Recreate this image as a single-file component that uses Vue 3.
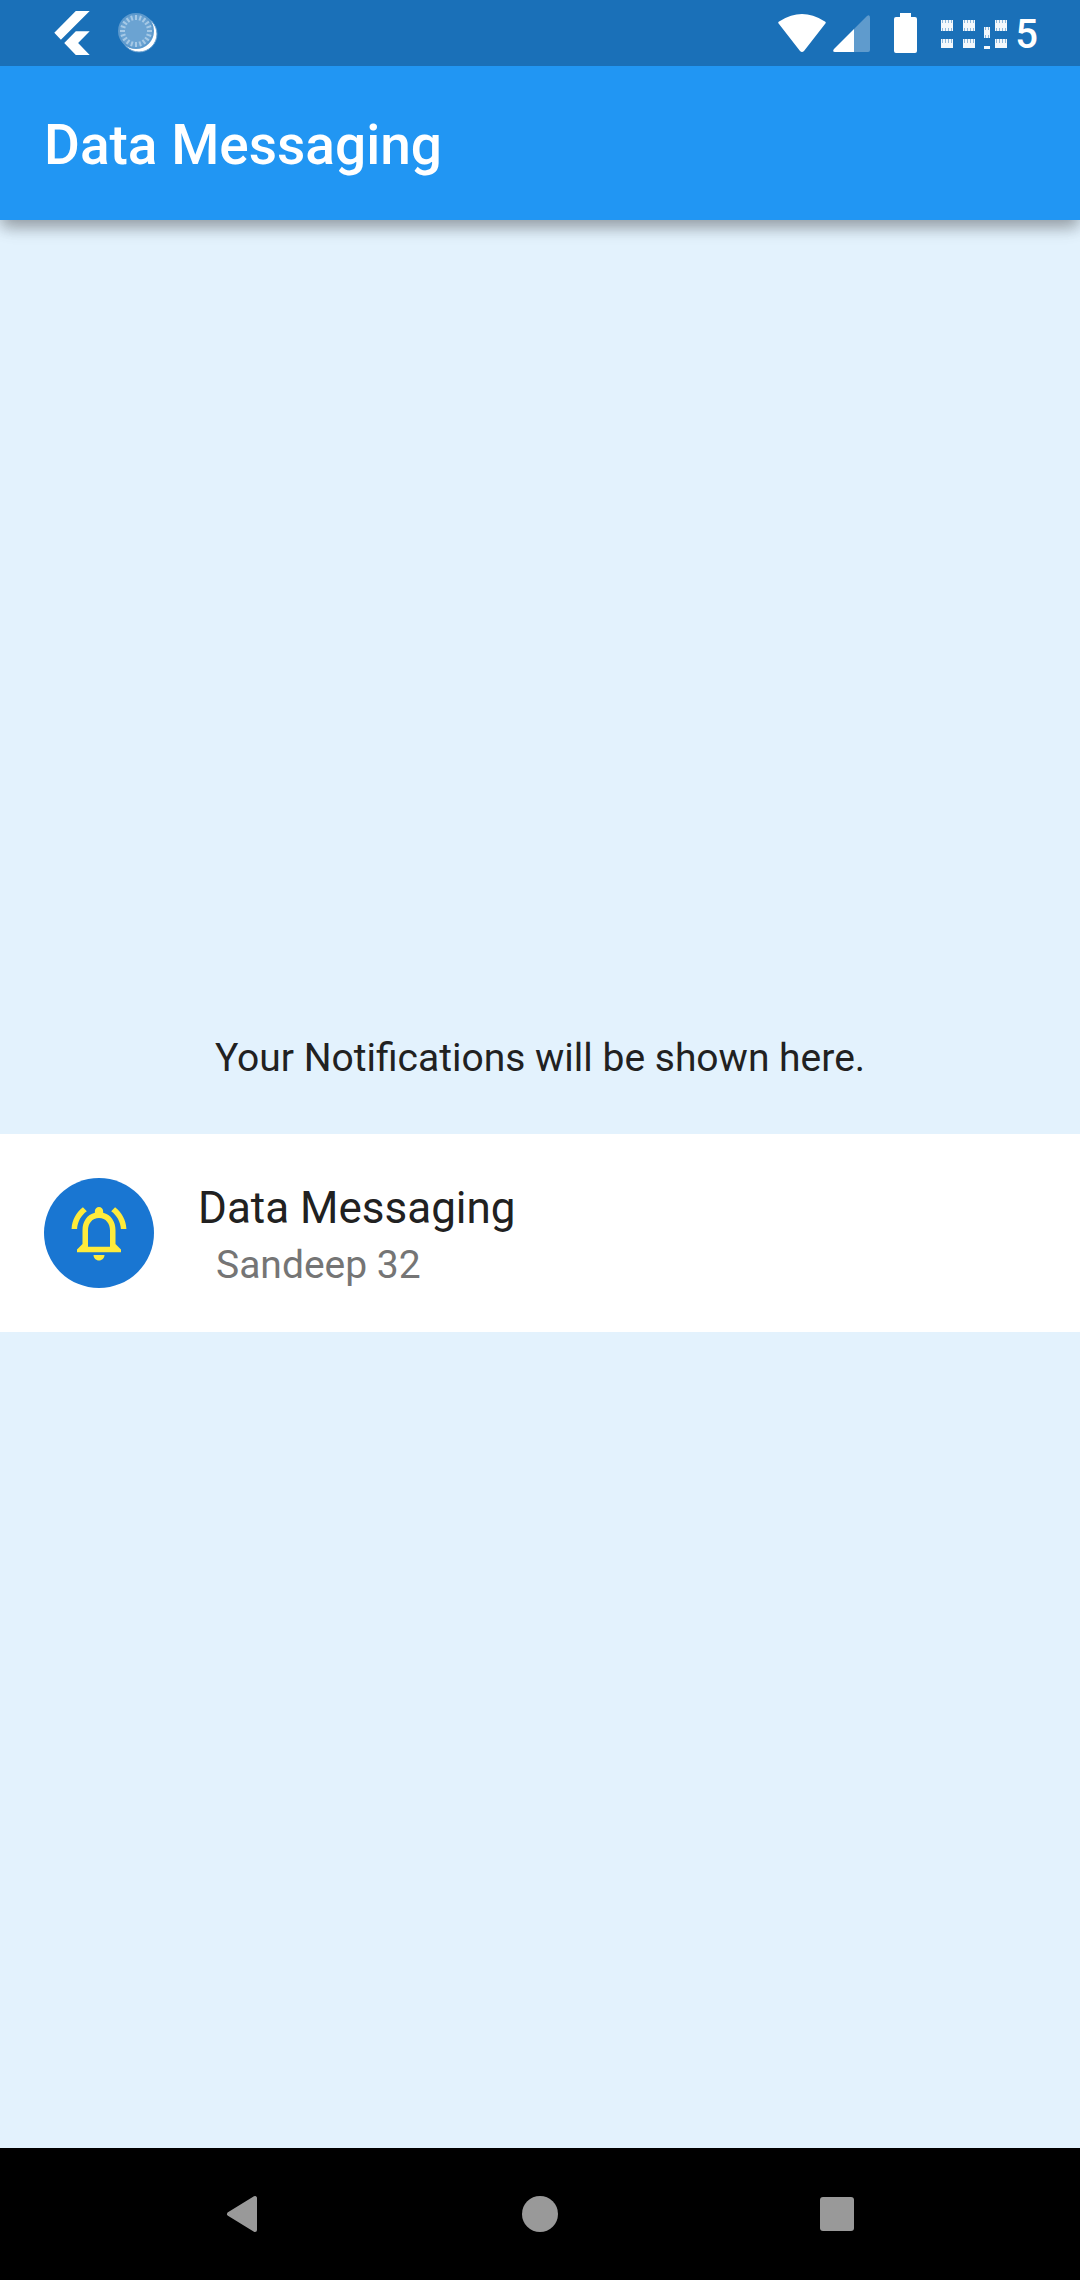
<script setup>
const glyphs = [
  { x: 0, y: 0, w: 12, bottom: 9 },
  { x: 22, y: 0, w: 12, bottom: 9 },
  { x: 43, y: 7, w: 6, bottom: 3 },
  { x: 54, y: 0, w: 12, bottom: 9 },
]
const notches = (w) => Array.from({ length: w / 3 }, (_, i) => i * 3)
const ticks = Array.from({ length: 20 }, (_, i) => i * 18)
const notifications = [{ title: 'Data Messaging', body: 'Sandeep 32' }]
</script>

<template>
  <div class="screen">
    <header class="status">
      <div class="group">
        <svg class="flutter" viewBox="73 32 107 133" aria-hidden="true">
          <path d="M138 32h42L93 119 73 98zM138 93h42l-35 36 35 36h-42l-35-36z" />
        </svg>
        <svg class="spinner" viewBox="0 0 42 42" aria-hidden="true">
          <circle cx="21" cy="22" r="18" fill="#fff" stroke="#5f9bce" stroke-width="1" />
          <circle cx="18" cy="19" r="18" fill="#5c99cd" />
          <circle cx="18" cy="19" r="16" fill="#6ba3d2" />
          <path
            v-for="t in ticks"
            :key="t"
            d="M18 3v5"
            :transform="`rotate(${t} 18 19)`"
            stroke="#a6c9e6"
            stroke-width="2"
          />
        </svg>
      </div>
      <div class="group">
        <svg class="wifi" viewBox="0 0 48 38" aria-hidden="true">
          <path d="M1 10Q-1 8 2 7Q24-7 46 7Q49 8 47 10L26 37Q24 39 22 37z" />
        </svg>
        <svg class="signal" viewBox="0 0 37 37" aria-hidden="true">
          <path d="M34 1Q37-1 37 3V35Q37 37 35 37H21V14z" opacity=".3" />
          <path d="M21 14V37H2Q-1 37 1 34z" />
        </svg>
        <svg class="battery" viewBox="0 0 23 40" aria-hidden="true">
          <path d="M6 0h11v4h4q2 0 2 2v32q0 2-2 2H2q-2 0-2-2V6q0-2 2-2h4z" />
        </svg>
        <div class="clock">
          <svg class="boxes" viewBox="0 0 66 30" aria-hidden="true">
            <g v-for="g in glyphs" :key="g.x" :transform="`translate(${g.x} ${g.y})`">
              <rect :width="g.w" height="11" fill="#f3f8fc" />
              <rect y="19" :width="g.w" :height="g.bottom" fill="#f3f8fc" />
              <g v-for="n in notches(g.w)" :key="n" fill="#8fb9dc">
                <rect :x="n + 1" width="1" height="3" />
                <rect :x="n + 1" y="8" width="1" height="3" />
                <rect v-if="g.bottom > 3" :x="n + 1" y="19" width="1" height="4" />
              </g>
            </g>
          </svg>
          <span>5</span>
        </div>
      </div>
    </header>

    <div class="appbar"><h1>Data Messaging</h1></div>

    <main class="content">
      <p class="hint">Your Notifications will be shown here.</p>
      <ul class="list">
        <li v-for="n in notifications" :key="n.title" class="tile">
          <div class="avatar">
            <svg viewBox="0 0 24 24" aria-hidden="true">
              <path d="M12 22c1.1 0 2-.9 2-2h-4c0 1.1.9 2 2 2zm6-6v-5c0-3.070-1.630-5.640-4.500-6.320V4c0-.83-.67-1.500-1.500-1.500s-1.500.67-1.500 1.500v.68C7.640 5.360 6 7.920 6 11v5l-2 2v1h16v-1l-2-2zm-2 1H8v-6c0-2.480 1.510-4.500 4-4.500s4 2.020 4 4.500v6zM7.580 4.080L6.150 2.650C3.750 4.480 2.170 7.300 2.030 10.500h2c.15-2.650 1.510-4.970 3.550-6.420zm12.390 6.420h2c-.15-3.200-1.730-6.020-4.120-7.850l-1.420 1.430c2.020 1.450 3.390 3.770 3.540 6.420z" />
            </svg>
          </div>
          <div class="text">
            <h2>{{ n.title }}</h2>
            <p>{{ n.body }}</p>
          </div>
        </li>
      </ul>
    </main>

    <nav class="navbar">
      <button type="button" aria-label="Back">
        <svg viewBox="0 0 38 38"><path d="M31 3V35L5 19z" stroke="#999" stroke-width="4" stroke-linejoin="round" /></svg>
      </button>
      <button type="button" aria-label="Home">
        <svg viewBox="0 0 38 38"><circle cx="19" cy="19" r="18" /></svg>
      </button>
      <button type="button" aria-label="Recent apps">
        <svg viewBox="0 0 38 38"><rect x="2" y="2" width="34" height="34" rx="3" /></svg>
      </button>
    </nav>
  </div>
</template>

<style>
body {
  margin: 0;
}
</style>

<style scoped>
.screen {
  display: flex;
  flex-direction: column;
  min-height: 100vh;
  background: #e3f2fd;
  color: #212121;
  font-family: Roboto, "Noto Sans", sans-serif;
}
h1,
h2,
p,
ul {
  margin: 0;
  padding: 0;
  font-weight: 400;
}
.status {
  position: relative;
  z-index: 1;
  display: flex;
  justify-content: space-between;
  height: 66px;
  padding: 0 42px 0 54px;
  background: #1a70b8;
}
.group {
  display: flex;
  align-items: center;
}
.status svg {
  display: block;
  fill: #fff;
}
.flutter {
  width: 36px;
  height: 44px;
}
.spinner {
  width: 42px;
  height: 42px;
  margin-left: 28px;
}
.wifi {
  width: 48px;
  height: 38px;
}
.signal {
  width: 37px;
  height: 37px;
  margin-left: 7px;
}
.battery {
  width: 23px;
  height: 40px;
  margin-left: 24px;
}
.clock {
  display: flex;
  align-items: center;
  gap: 8px;
  margin-left: 24px;
  padding-top: 4px;
  color: #fff;
  font-size: 40px;
  font-weight: 500;
  line-height: 62px;
}
.boxes {
  width: 66px;
  height: 30px;
}
.appbar {
  display: flex;
  align-items: center;
  height: 150px;
  padding: 4px 44px 0;
  background: #2196f3;
  box-shadow: 0 11px 14px -3px rgba(0, 0, 0, 0.18), 0 6px 14px rgba(0, 0, 0, 0.14), 0 3px 24px rgba(0, 0, 0, 0.1);
}
h1 {
  color: #fff;
  font-size: 55px;
  font-weight: 500;
}
.content {
  display: flex;
  flex: 1;
  flex-direction: column;
  justify-content: center;
  gap: 54px;
}
.hint {
  font-size: 39px;
  line-height: 44px;
  text-align: center;
}
.list {
  list-style: none;
}
.tile {
  display: flex;
  align-items: center;
  gap: 44px;
  height: 198px;
  padding: 0 44px;
  background: #fff;
}
.avatar {
  display: flex;
  align-items: center;
  justify-content: center;
  width: 110px;
  height: 110px;
  border-radius: 50%;
  background: #1976d2;
}
.avatar svg {
  width: 66px;
  height: 66px;
  fill: #ffeb3b;
}
h2 {
  font-size: 44px;
  line-height: 64px;
}
.text p {
  padding-left: 18px;
  color: #757575;
  font-size: 39px;
  line-height: 50px;
}
.navbar {
  display: flex;
  align-items: center;
  justify-content: center;
  gap: 198px;
  height: 132px;
  background: #000;
}
.navbar button {
  display: flex;
  align-items: center;
  justify-content: center;
  width: 99px;
  height: 132px;
  padding: 0;
  border: 0;
  background: none;
}
.navbar svg {
  width: 38px;
  height: 38px;
  fill: #999;
}
</style>
